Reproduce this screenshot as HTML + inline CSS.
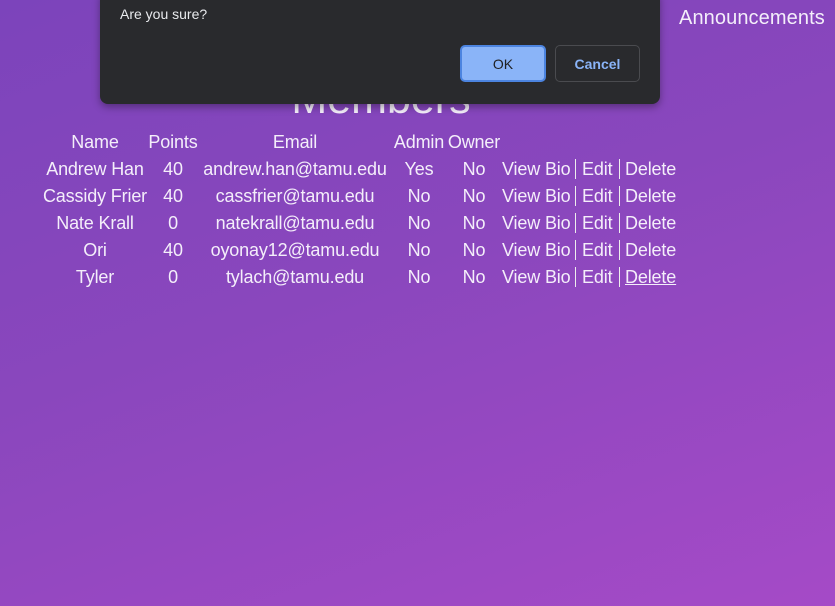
<!DOCTYPE html>
<html><head><meta charset="utf-8"><style>
html,body{margin:0;padding:0;width:835px;height:606px;overflow:hidden}
body{background:linear-gradient(160deg,#7c44bb 0%,#8a47bd 45%,#a54ac7 100%);font-family:"Liberation Sans",sans-serif;color:#fff;position:relative}
.t{position:absolute;font-size:18px;font-weight:300;letter-spacing:-0.15px;white-space:nowrap;line-height:20px;color:#f4eefa}
.c{transform:translateX(-50%)}
.dlg{position:absolute;left:100px;top:-10px;width:560px;height:114px;background:#292a2d;border-radius:8px;box-shadow:0 3px 8px rgba(0,0,0,.35)}
.btn{position:absolute;top:55px;height:37px;border-radius:5px;font-size:14px;font-weight:bold;display:flex;align-items:center;justify-content:center;box-sizing:border-box}
</style></head><body>
<div class="t" style="left:679px;top:8px;font-size:20px;letter-spacing:0.1px">Announcements</div>
<div class="t c" style="left:381px;top:76px;font-size:43px;line-height:46px;letter-spacing:0">Members</div>
<div class="dlg">
<div style="position:absolute;left:20px;top:16px;font-size:14px;color:#e8eaed">Are you sure?</div>
<div class="btn" style="left:360px;width:86px;background:#8ab4f8;border:2px solid #4c84e0;color:#202124;font-weight:normal">OK</div>
<div class="btn" style="left:455px;width:85px;border:1px solid #4a4b4f;color:#8ab4f8">Cancel</div>
</div>
<div id="tbl"></div>
<script>
var rows=[["Name","Points","Email","Admin","Owner",""],
["Andrew Han","40","andrew.han@tamu.edu","Yes","No",1],
["Cassidy Frier","40","cassfrier@tamu.edu","No","No",1],
["Nate Krall","0","natekrall@tamu.edu","No","No",1],
["Ori","40","oyonay12@tamu.edu","No","No",1],
["Tyler","0","tylach@tamu.edu","No","No",2]];
var cx=[95,173,295,419,474];var h="";
rows.forEach(function(r,i){var y=132+i*27;
for(var j=0;j<5;j++)h+='<div class="t c" style="left:'+cx[j]+'px;top:'+y+'px">'+r[j]+'</div>';
if(r[5]){h+='<div class="t" style="left:502px;top:'+y+'px">View Bio</div><div style="position:absolute;left:575px;top:'+(y)+'px;width:1px;height:20px;background:#eee"></div><div class="t" style="left:582px;top:'+y+'px">Edit</div><div style="position:absolute;left:619px;top:'+(y)+'px;width:1px;height:20px;background:#eee"></div><div class="t" style="left:625px;top:'+y+'px;'+(r[5]==2?'text-decoration:underline':'')+'">Delete</div>';}
});
document.getElementById('tbl').innerHTML=h;
</script>
</body></html>
